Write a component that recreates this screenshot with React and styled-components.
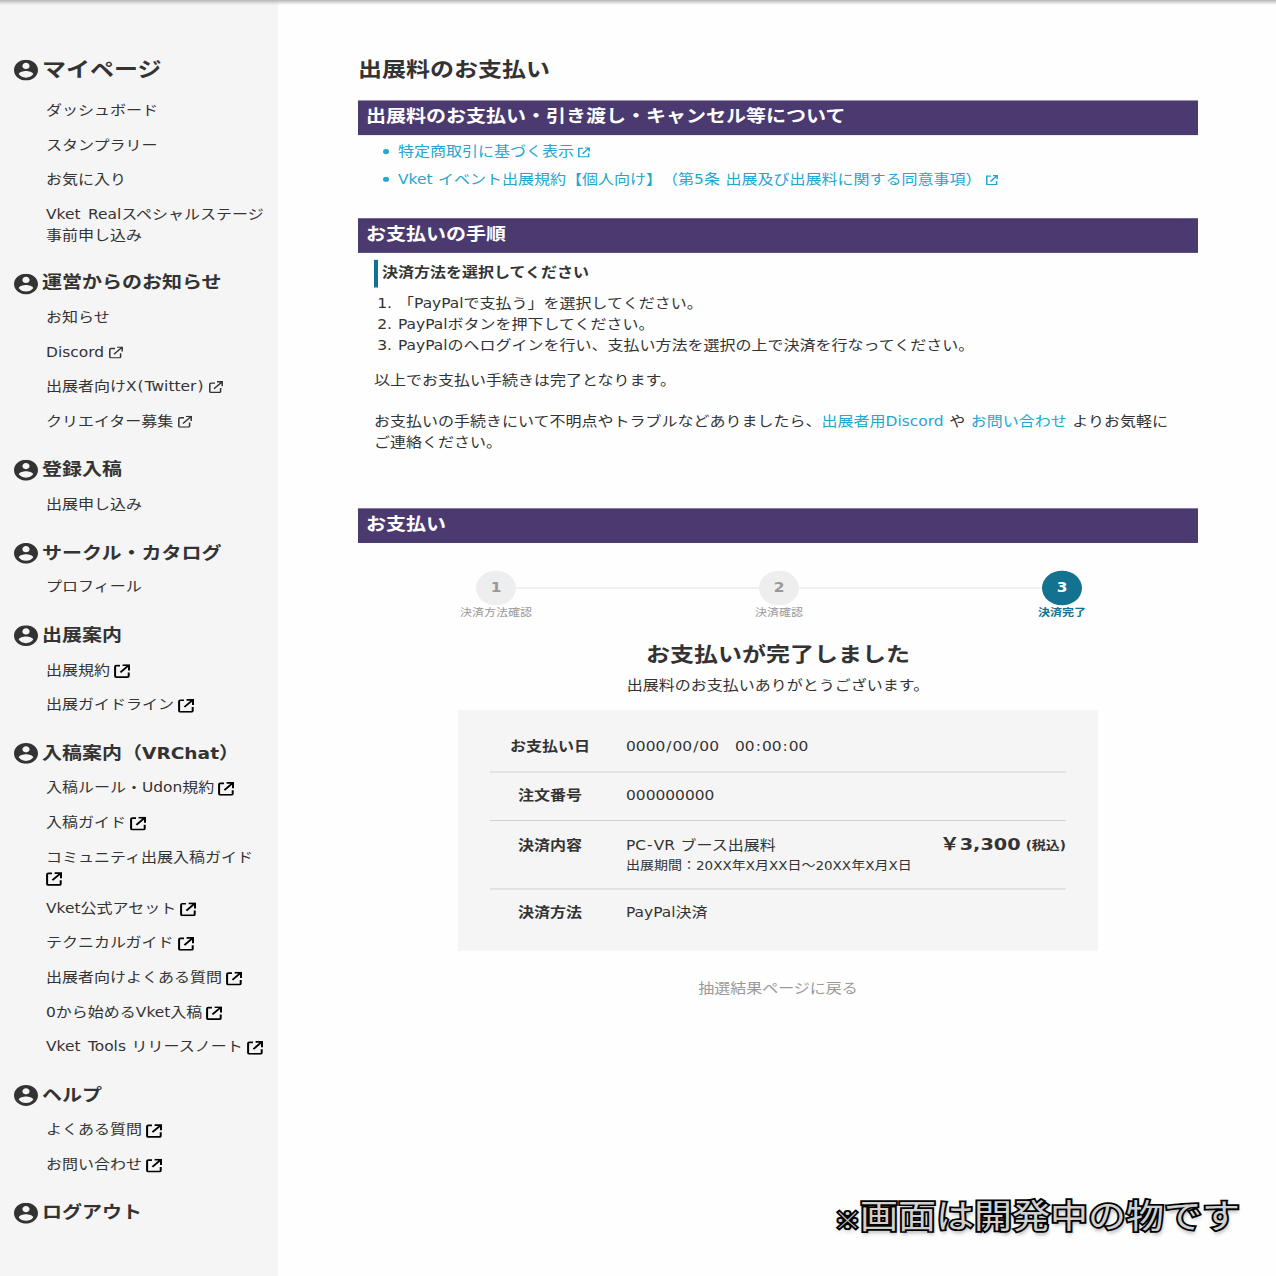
import { Fragment } from "react"
import styled, { createGlobalStyle, css } from "styled-components"

const GlobalStyle = createGlobalStyle`
  * {
    box-sizing: border-box;
  }

  body {
    margin: 0;
    background: #fefefe;
  }

  h1, h2, h3, p, ul, ol, dl, dt, dd {
    margin: 0;
    padding: 0;
  }

  a {
    color: inherit;
    text-decoration: none;
  }
`

const Frame = styled.div`
  width: 1276px;
  height: 1276px;
  overflow: hidden;
`

const Page = styled.div`
  position: relative;
  display: flex;
  width: 1276px;
  height: 1474px;
  transform: scaleY(0.866);
  transform-origin: 0 0;
  color: #333;
  background: #fefefe;
  font-family: "Noto Sans CJK JP", sans-serif;
  font-size: 16px;
  line-height: 24px;
  word-spacing: 2px;
  text-spacing-trim: space-all;
`

const TopShadow = styled.div`
  position: absolute;
  top: 0;
  left: 0;
  right: 0;
  height: 6px;
  background: linear-gradient(#b4b4b4, rgba(200, 200, 200, 0.6) 50%, rgba(255, 255, 255, 0));
`

// latin letters and digits inside Japanese text
const En = styled.span`
  font-family: "DejaVu Sans", sans-serif;
  font-size: 0.965em;
  line-height: 1;
  word-spacing: 2.5px;
`

const Mark = styled.span`
  padding: 0 1px;
`

const Sidebar = styled.nav`
  width: 278px;
  flex-shrink: 0;
  padding: 62.7px 0 0 14px;
  background: #f5f5f5;
`

const Section = styled.section`
  margin-bottom: 34.1px;
`

const SectionTitle = styled.h2`
  display: flex;
  align-items: center;
  gap: 4px;
  height: ${(p) => (p.$large ? "37.4px" : "24px")};
  margin-bottom: 13.5px;
  font-size: ${(p) => (p.$large ? "24px" : "20px")};
  white-space: nowrap;

  svg {
    flex-shrink: 0;
  }

  > span {
    margin-top: -4.5px;
  }

  ${En} {
    font-size: 0.93em;
  }
`

const NavList = styled.ul`
  list-style: none;
  width: 254px;
  padding-left: 32px;
`

const NavItem = styled.li`
  width: 222px;
  margin-bottom: ${(p) => (p.$tight ? "11.6px" : "16px")};
`

const Icon = styled.svg`
  width: ${(p) => p.$size}px;
  height: ${(p) => p.$size}px;
  margin-left: ${(p) => p.$gap}px;
  vertical-align: -2px;
  fill: none;
  stroke: currentColor;

  ${(p) =>
    p.$bold &&
    css`
      color: #000;
      vertical-align: -4.2px;
    `}
`

const Main = styled.main`
  width: 840px;
  margin-left: 80px;
  padding-top: 61px;
`

const PageTitle = styled.h1`
  height: 54.7px;
  font-size: 24px;
  line-height: 36px;
`

const Bar = styled.h2`
  height: 40px;
  padding-left: 8px;
  color: #fff;
  background: #4a3a70;
  font-size: 20px;
  line-height: 34.5px;
`

const LinkList = styled.ul`
  height: 96px;
  padding: 5.7px 0 0 40px;
  color: #22a7d0;
  list-style: none;

  li {
    margin-bottom: 8px;
  }

  li::before {
    content: "";
    display: inline-block;
    width: 6px;
    height: 6px;
    margin: 0 9px 0 -15px;
    border-radius: 50%;
    background: currentColor;
    vertical-align: 2.5px;
  }
`

const Steps = styled.div`
  height: 295px;
  padding: 8px 16px 0;
`

const StepsTitle = styled.h3`
  height: 32px;
  margin-bottom: 5.5px;
  padding-left: 4px;
  border-left: 4px solid #12728f;
  font-size: 16px;
  line-height: 27px;
`

const StepList = styled.ol`
  padding-left: 24px;
  margin-bottom: 16px;

  li::marker {
    font-family: "DejaVu Sans", sans-serif;
    font-size: 15.6px;
    word-spacing: 1px;
  }
`

const Note = styled.p`
  margin-bottom: 24px;
  white-space: nowrap;

  a {
    color: #22a7d0;
  }
`

const Stepper = styled.div`
  display: flex;
  padding: 32px 116px 0 118px;
`

const Step = styled.div`
  display: flex;
  flex-direction: column;
  align-items: center;
  width: 40px;
  color: ${(p) => (p.$active ? "#12728f" : "#999")};
  font-size: 12px;
  font-weight: ${(p) => (p.$active ? 700 : 400)};
  line-height: 14px;
  white-space: nowrap;
`

const StepNumber = styled.span`
  width: 40px;
  height: 40px;
  border-radius: 50%;
  color: ${(p) => (p.$active ? "#fff" : "#999")};
  background: ${(p) => (p.$active ? "#12728f" : "#eee")};
  font-size: 16px;
  font-weight: 700;
  line-height: 37px;
  text-align: center;
`

const StepLine = styled.div`
  flex: 1;
  height: 2px;
  margin-top: 19px;
  background: #eee;
`

const Done = styled.div`
  padding: 24px 0 18px;
  text-align: center;

  h2 {
    font-size: 24px;
    line-height: 36px;
  }

  p {
    margin-top: 5px;
  }
`

const Receipt = styled.dl`
  width: 640px;
  margin: 0 auto;
  padding: 15.5px 32px;
  background: #f5f5f5;
`

const ReceiptRow = styled.div`
  display: flex;
  padding: 13.2px 0 18.4px;
  line-height: 24px;

  & + & {
    border-top: 1px solid #ccc;
  }

  dt {
    width: 120px;
    margin-right: 16px;
    font-weight: 700;
    text-align: center;
  }

  dd {
    flex: 1;
    white-space: nowrap;
  }
`

const Period = styled.p`
  margin: 2.5px 0 -2.5px;
  font-size: 14px;
  line-height: 22px;
`

const Price = styled.strong`
  font-size: 20px;

  small {
    margin-left: 5px;
    font-size: 14px;
  }
`

const BackLink = styled.a`
  display: block;
  margin-top: 30px;
  color: #999;
  text-align: center;
`

const Watermark = styled.p`
  position: absolute;
  right: 36px;
  top: 1372px;
  color: #d0d0d0;
  font-size: 38px;
  font-weight: 400;
  line-height: 60px;
  white-space: nowrap;
  -webkit-text-stroke: 4px #000;
  paint-order: stroke fill;
  text-shadow: 1px 3px 5px rgba(0, 0, 0, 0.45);

  span {
    font-size: 25px;
  }
`

const menu = [
  {
    title: "マイページ",
    large: true,
    items: [
      { label: "ダッシュボード" },
      { label: "スタンプラリー" },
      { label: "お気に入り" },
      { label: "Vket Realスペシャルステージ事前申し込み" },
    ],
  },
  {
    title: "運営からのお知らせ",
    items: [
      { label: "お知らせ" },
      { label: "Discord", icon: "thin" },
      { label: "出展者向けX(Twitter)", icon: "thin" },
      { label: "クリエイター募集", icon: "thin" },
    ],
  },
  { title: "登録入稿", items: [{ label: "出展申し込み" }] },
  { title: "サークル・カタログ", items: [{ label: "プロフィール" }] },
  {
    title: "出展案内",
    items: [
      { label: "出展規約", icon: "bold" },
      { label: "出展ガイドライン", icon: "bold" },
    ],
  },
  {
    title: "入稿案内（VRChat）",
    items: [
      { label: "入稿ルール・Udon規約", icon: "bold" },
      { label: "入稿ガイド", icon: "bold" },
      { label: "コミュニティ出展入稿ガイド", icon: "bold", tight: true },
      { label: "Vket公式アセット", icon: "bold" },
      { label: "テクニカルガイド", icon: "bold" },
      { label: "出展者向けよくある質問", icon: "bold" },
      { label: "0から始めるVket入稿", icon: "bold" },
      { label: "Vket Tools リリースノート", icon: "bold" },
    ],
  },
  {
    title: "ヘルプ",
    items: [
      { label: "よくある質問", icon: "bold" },
      { label: "お問い合わせ", icon: "bold" },
    ],
  },
  { title: "ログアウト", items: [] },
]

const spaced = (text) =>
  text.split(/([/:()-])/).map((part, i) => (i % 2 ? <Mark key={i}>{part}</Mark> : part))

const Mixed = ({ children }) =>
  children
    .split(/([!-~]+(?: [!-~]+)*)/)
    .map((part, i) =>
      i % 2 ? <En key={i}>{spaced(part)}</En> : <Fragment key={i}>{part}</Fragment>
    )

const AccountIcon = () => (
  <svg width="24" height="24" viewBox="2 2 20 20" fill="currentColor">
    <path d="M12 2C6.48 2 2 6.48 2 12s4.48 10 10 10 10-4.48 10-10S17.52 2 12 2zm0 3c1.66 0 3 1.34 3 3s-1.34 3-3 3-3-1.34-3-3 1.34-3 3-3zm0 14.2c-2.5 0-4.71-1.28-6-3.22.03-1.99 4-3.08 6-3.08 1.99 0 5.97 1.09 6 3.08-1.29 1.94-3.5 3.22-6 3.22z" />
  </svg>
)

const ExternalBold = ({ gap = 4 }) => (
  <Icon $size={16} $gap={gap} $bold viewBox="0 0 16 16" strokeWidth="2">
    <path d="M6 1.6H2.3Q1.1 1.6 1.1 2.8V13.7Q1.1 14.9 2.3 14.9H13.4Q14.7 14.9 14.7 13.7V9.5" />
    <path d="M8.6 1.1H15V7.2M14.6 1.4L6.4 9.4" />
  </Icon>
)

const ExternalThin = () => (
  <Icon $size={14} $gap={5} viewBox="0 0 14 14" strokeWidth="1.5">
    <path d="M6 2.4H2Q.8 2.4 .8 3.6V12Q.8 13.2 2 13.2H10.4Q11.6 13.2 11.6 12V8" />
    <path d="M8 .8H13.2V6M12.9 1.1L5 9" />
  </Icon>
)

const ExternalSmall = ({ gap = 4 }) => (
  <Icon $size={12} $gap={gap} viewBox="0 0 12 12" strokeWidth="1.5">
    <path d="M5 1.4H.8V11.2H10.6V7" />
    <path d="M7 .8H11.2V5M11 1L4.5 7.5" />
  </Icon>
)

const App = () => {
  return (
    <Frame>
      <GlobalStyle />
      <Page>
        <Sidebar>
          {menu.map((section) => (
            <Section key={section.title}>
              <SectionTitle $large={section.large}>
                <AccountIcon />
                <span>
                  <Mixed>{section.title}</Mixed>
                </span>
              </SectionTitle>
              <NavList>
                {section.items.map((item) => (
                  <NavItem key={item.label} $tight={item.tight}>
                    <a href="#">
                      <Mixed>{item.label}</Mixed>
                      {item.icon === "bold" && <ExternalBold gap={item.tight ? 0 : 4} />}
                      {item.icon === "thin" && <ExternalThin />}
                    </a>
                  </NavItem>
                ))}
              </NavList>
            </Section>
          ))}
        </Sidebar>

        <Main>
          <PageTitle>出展料のお支払い</PageTitle>

          <Bar>出展料のお支払い・引き渡し・キャンセル等について</Bar>
          <LinkList>
            <li>
              <a href="#">
                特定商取引に基づく表示
                <ExternalSmall />
              </a>
            </li>
            <li>
              <a href="#">
                <Mixed>Vket イベント出展規約【個人向け】（第5条 出展及び出展料に関する同意事項）</Mixed>
                <ExternalSmall />
              </a>
            </li>
          </LinkList>

          <Bar>お支払いの手順</Bar>
          <Steps>
            <StepsTitle>決済方法を選択してください</StepsTitle>
            <StepList>
              <li>
                <Mixed>「PayPalで支払う」を選択してください。</Mixed>
              </li>
              <li>
                <Mixed>PayPalボタンを押下してください。</Mixed>
              </li>
              <li>
                <Mixed>PayPalのへログインを行い、支払い方法を選択の上で決済を行なってください。</Mixed>
              </li>
            </StepList>
            <Note>以上でお支払い手続きは完了となります。</Note>
            <Note>
              お支払いの手続きにいて不明点やトラブルなどありましたら、
              <a href="#">
                <Mixed>出展者用Discord</Mixed>
              </a>{" "}
              や <a href="#">お問い合わせ</a> よりお気軽に
              <br />
              ご連絡ください。
            </Note>
          </Steps>

          <Bar>お支払い</Bar>
          <Stepper>
            <Step>
              <StepNumber>
                <En>1</En>
              </StepNumber>
              決済方法確認
            </Step>
            <StepLine />
            <Step>
              <StepNumber>
                <En>2</En>
              </StepNumber>
              決済確認
            </Step>
            <StepLine />
            <Step $active>
              <StepNumber $active>
                <En>3</En>
              </StepNumber>
              決済完了
            </Step>
          </Stepper>

          <Done>
            <h2>お支払いが完了しました</h2>
            <p>出展料のお支払いありがとうございます。</p>
          </Done>

          <Receipt>
            <ReceiptRow>
              <dt>お支払い日</dt>
              <dd>
                <Mixed>0000/00/00　00:00:00</Mixed>
              </dd>
            </ReceiptRow>
            <ReceiptRow>
              <dt>注文番号</dt>
              <dd>
                <En>000000000</En>
              </dd>
            </ReceiptRow>
            <ReceiptRow>
              <dt>決済内容</dt>
              <dd>
                <Mixed>PC-VR ブース出展料</Mixed>
                <Period>
                  <Mixed>出展期間：20XX年X月XX日～20XX年X月X日</Mixed>
                </Period>
              </dd>
              <Price>
                <Mixed>￥3,300</Mixed>
                <small>
                  <En>(</En>税込<En>)</En>
                </small>
              </Price>
            </ReceiptRow>
            <ReceiptRow>
              <dt>決済方法</dt>
              <dd>
                <Mixed>PayPal決済</Mixed>
              </dd>
            </ReceiptRow>
          </Receipt>
          <BackLink href="#">抽選結果ページに戻る</BackLink>
        </Main>

        <TopShadow />
        <Watermark>
          <span>※</span>画面は開発中の物です
        </Watermark>
      </Page>
    </Frame>
  )
}

export default App
